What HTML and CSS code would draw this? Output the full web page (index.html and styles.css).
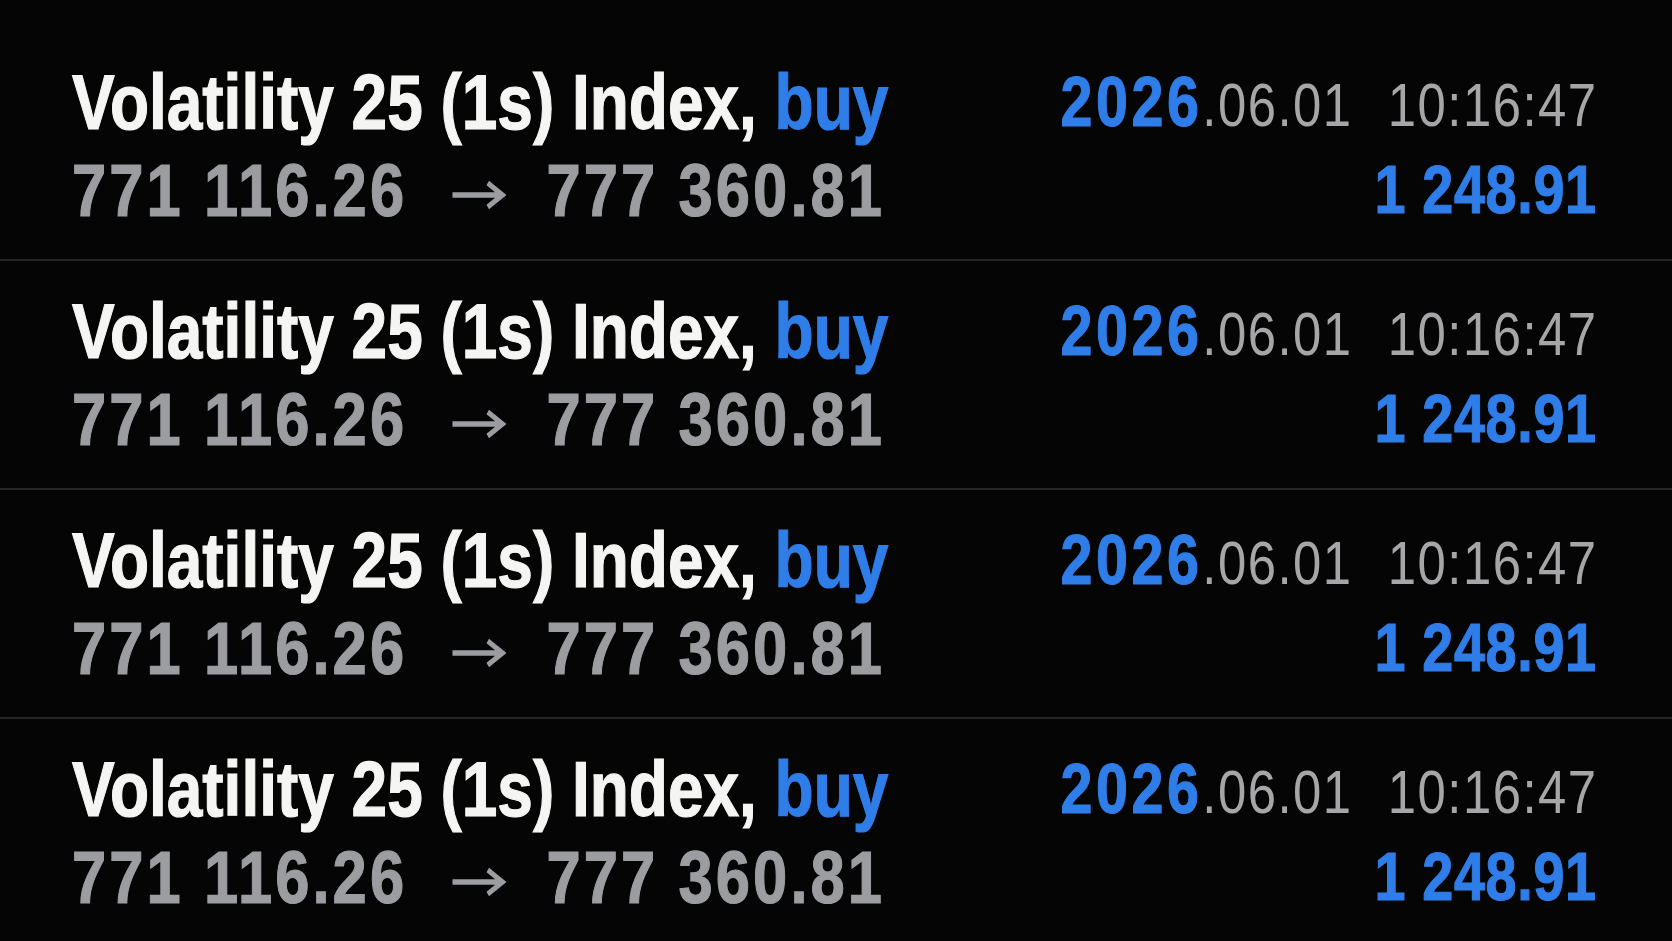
FILE: index.html
```html
<!DOCTYPE html>
<html lang="en">
<head>
<meta charset="utf-8">
<title>Deals</title>
<link rel="stylesheet" href="styles.css">
</head>
<body>
<div class="list">
  <div class="deal">
    <div class="left">
      <div class="title">Volatility 25 (1s) Index, <span class="side">buy</span></div>
      <div class="prices"><span class="price">771 116.26</span><svg class="arrow" viewBox="0 0 68 30" width="68" height="30"><path d="M2 15H63M45 3L63 15L45 27" fill="none" stroke="#9c9da1" stroke-width="5.5"/></svg><span class="price">777 360.81</span></div>
    </div>
    <div class="right">
      <div class="date"><span class="year">2026</span><span class="md">.06.01</span><span class="time">10:16:47</span></div>
      <div class="profit">1 248.91</div>
    </div>
  </div>
  <div class="deal">
    <div class="left">
      <div class="title">Volatility 25 (1s) Index, <span class="side">buy</span></div>
      <div class="prices"><span class="price">771 116.26</span><svg class="arrow" viewBox="0 0 68 30" width="68" height="30"><path d="M2 15H63M45 3L63 15L45 27" fill="none" stroke="#9c9da1" stroke-width="5.5"/></svg><span class="price">777 360.81</span></div>
    </div>
    <div class="right">
      <div class="date"><span class="year">2026</span><span class="md">.06.01</span><span class="time">10:16:47</span></div>
      <div class="profit">1 248.91</div>
    </div>
  </div>
  <div class="deal">
    <div class="left">
      <div class="title">Volatility 25 (1s) Index, <span class="side">buy</span></div>
      <div class="prices"><span class="price">771 116.26</span><svg class="arrow" viewBox="0 0 68 30" width="68" height="30"><path d="M2 15H63M45 3L63 15L45 27" fill="none" stroke="#9c9da1" stroke-width="5.5"/></svg><span class="price">777 360.81</span></div>
    </div>
    <div class="right">
      <div class="date"><span class="year">2026</span><span class="md">.06.01</span><span class="time">10:16:47</span></div>
      <div class="profit">1 248.91</div>
    </div>
  </div>
  <div class="deal">
    <div class="left">
      <div class="title">Volatility 25 (1s) Index, <span class="side">buy</span></div>
      <div class="prices"><span class="price">771 116.26</span><svg class="arrow" viewBox="0 0 68 30" width="68" height="30"><path d="M2 15H63M45 3L63 15L45 27" fill="none" stroke="#9c9da1" stroke-width="5.5"/></svg><span class="price">777 360.81</span></div>
    </div>
    <div class="right">
      <div class="date"><span class="year">2026</span><span class="md">.06.01</span><span class="time">10:16:47</span></div>
      <div class="profit">1 248.91</div>
    </div>
  </div>
</div>
</body>
</html>
```

FILE: styles.css
```css
html, body {
  margin: 0;
  padding: 0;
  background: #050505;
  height: 100%;
  overflow: hidden;
}

body {
  font-family: "Liberation Sans", Arial, sans-serif;
}

.list {
  padding-top: 30px;
  display: flex;
  flex-direction: column;
}

.deal {
  box-sizing: border-box;
  height: 229px;
  padding: 30px 76px 0 72px;
  display: flex;
  justify-content: space-between;
  align-items: flex-start;
}

.deal + .deal {
  border-top: 2px solid #262626;
  padding-top: 28px;
}

/* Narrow grotesque: Arial metrics compressed horizontally */
.left {
  flex: 1 1 auto;
  min-width: 0;
  display: flex;
  flex-direction: column;
  transform: scaleX(0.82);
  transform-origin: left top;
}

.title {
  font-size: 78px;
  line-height: 84px;
  font-weight: 700;
  color: #f5f5f3;
  white-space: nowrap;
  -webkit-text-stroke: 1.2px currentColor;
}

.side {
  color: #2f7de8;
}

.prices {
  display: flex;
  align-items: center;
  height: 92px;
  font-size: 75px;
  line-height: 92px;
  font-weight: 700;
  color: #9c9da1;
  white-space: nowrap;
}

.price {
  letter-spacing: 3.75px;
  -webkit-text-stroke: 1.2px currentColor;
}

.arrow {
  flex: none;
  margin: 10px 49px 0 53px;
}

.right {
  flex: none;
  display: flex;
  flex-direction: column;
  align-items: flex-end;
  transform: scaleX(0.82);
  transform-origin: right top;
}

.date {
  font-size: 70px;
  line-height: 84px;
  white-space: nowrap;
}

.year {
  font-weight: 700;
  color: #2f7de8;
  letter-spacing: 4.3px;
  -webkit-text-stroke: 1.2px currentColor;
}

.md,
.time {
  font-size: 62px;
  font-weight: 400;
  color: #a6a6a8;
  letter-spacing: 1.8px;
}

.time {
  margin-left: 43px;
  margin-right: -1.8px;
}

.profit {
  font-size: 68px;
  line-height: 84px;
  font-weight: 700;
  color: #2f7de8;
  letter-spacing: 0.8px;
  white-space: nowrap;
  margin-right: -0.8px;
  -webkit-text-stroke: 1.2px currentColor;
}
```
